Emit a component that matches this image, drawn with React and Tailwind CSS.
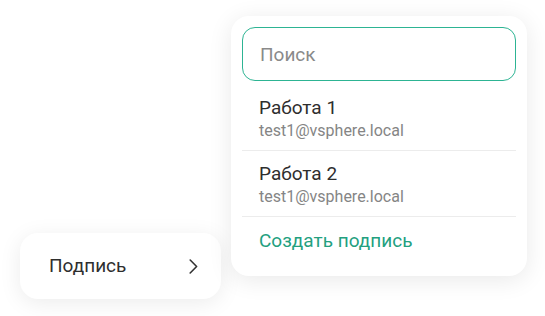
// Меню подписи: пункт "Подпись" и выпадающий список с поиском
import { useState } from 'react'

const signatures = [
  { id: 1, name: 'Работа 1', email: 'test1@vsphere.local' },
  { id: 2, name: 'Работа 2', email: 'test1@vsphere.local' },
]

function App() {
  const [query, setQuery] = useState('')

  return (
    <div
      className="w-[545px] h-[316px] bg-white flex items-start pt-4 pl-5 gap-[10px] overflow-hidden"
      style={{ fontFamily: 'Roboto, "Noto Sans", sans-serif' }}
    >
      {/* ── пункт меню ── */}
      <button className="mt-[217px] w-[201px] h-[66px] bg-white rounded-[18px] shadow-[0_4px_22px_rgba(0,0,0,0.08)] flex items-center justify-between pl-[29px] pr-[23px] text-[19px] leading-6 text-[#2e2e2e]">
        <span>Подпись</span>
        <svg width="9" height="15" viewBox="0 0 9 15" fill="none">
          <path d="M1.2 1L7.6 7.5L1.2 14" stroke="#333" strokeWidth="1.6" strokeLinecap="round" strokeLinejoin="round" />
        </svg>
      </button>

      {/* ── выпадающий список ── */}
      <div className="w-[296px] bg-white rounded-[18px] shadow-[0_4px_24px_rgba(0,0,0,0.09)] px-[11px] pt-[11px] pb-[11px]">
        <input
          value={query}
          onChange={(e) => setQuery(e.target.value)}
          placeholder="Поиск"
          className="w-full h-[54px] border border-[#2db493] rounded-[13px] px-[17px] text-[19px] text-[#2e2e2e] placeholder:text-[#8a8a8a] outline-none"
        />

        <ul className="mt-[4px]">
          {signatures.map((s) => (
            <li key={s.id} className="px-[17px] pt-[11px] pb-[8px] border-b border-[#ececec]">
              <p className="text-[19px] leading-6 text-[#2e2e2e]">{s.name}</p>
              <p className="text-[16px] leading-[22px] text-[#858585]">{s.email}</p>
            </li>
          ))}
        </ul>

        <button className="w-full text-left px-[17px] py-3 text-[19px] leading-6 text-[#23a07f]">
          Создать подпись
        </button>
      </div>
    </div>
  )
}

export default App
